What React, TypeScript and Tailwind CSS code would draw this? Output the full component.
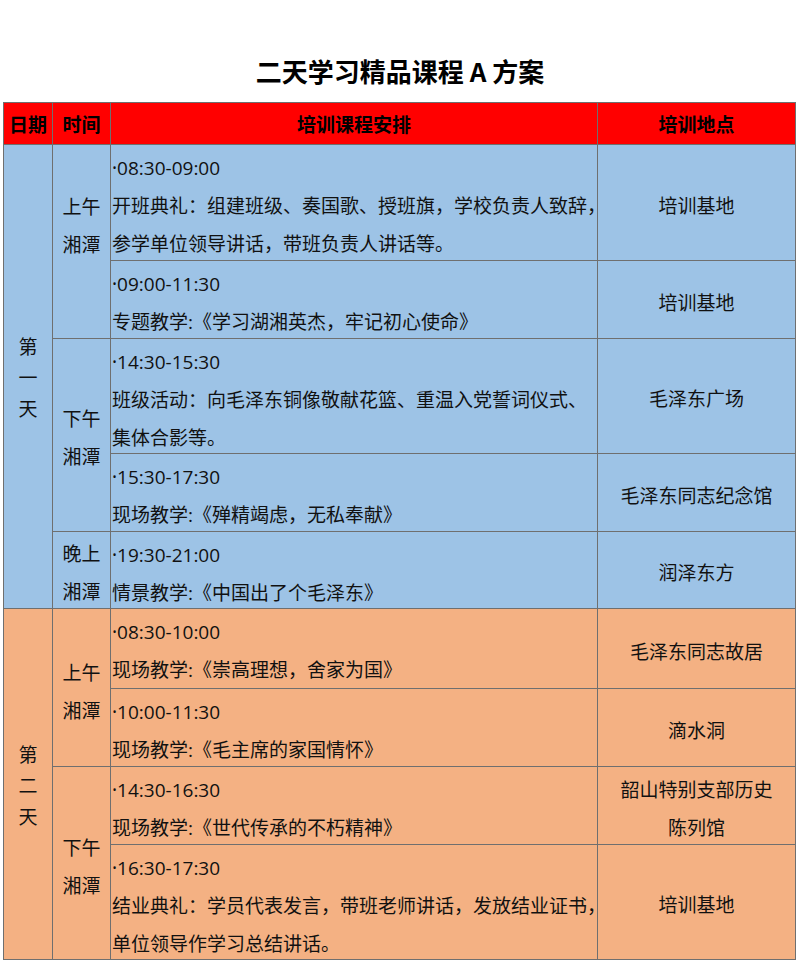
const FONT = "font-['Open_Sans','Noto_Sans_CJK_SC',sans-serif]";

type Row = {
  h: number;
  time: string;
  lines: string[];
  place: string[];
};

const BLUE = "bg-[#9DC3E6]";
const ORANGE = "bg-[#F4B183]";

const day1: Row[] = [
  {
    h: 116,
    time: "08:30-09:00",
    lines: ["开班典礼：组建班级、奏国歌、授班旗，学校负责人致辞，", "参学单位领导讲话，带班负责人讲话等。"],
    place: ["培训基地"],
  },
  { h: 78, time: "09:00-11:30", lines: ["专题教学:《学习湖湘英杰，牢记初心使命》"], place: ["培训基地"] },
  {
    h: 115,
    time: "14:30-15:30",
    lines: ["班级活动：向毛泽东铜像敬献花篮、重温入党誓词仪式、", "集体合影等。"],
    place: ["毛泽东广场"],
  },
  { h: 78, time: "15:30-17:30", lines: ["现场教学:《殚精竭虑，无私奉献》"], place: ["毛泽东同志纪念馆"] },
  { h: 77, time: "19:30-21:00", lines: ["情景教学:《中国出了个毛泽东》"], place: ["润泽东方"] },
];

const day2: Row[] = [
  { h: 80, time: "08:30-10:00", lines: ["现场教学:《崇高理想，舍家为国》"], place: ["毛泽东同志故居"] },
  { h: 78, time: "10:00-11:30", lines: ["现场教学:《毛主席的家国情怀》"], place: ["滴水洞"] },
  { h: 78, time: "14:30-16:30", lines: ["现场教学:《世代传承的不朽精神》"], place: ["韶山特别支部历史", "陈列馆"] },
  {
    h: 115,
    time: "16:30-17:30",
    lines: ["结业典礼：学员代表发言，带班老师讲话，发放结业证书，", "单位领导作学习总结讲话。"],
    place: ["培训基地"],
  },
];

const cell = "border border-[#6f6f6f] p-0";

function Content({ time, lines }: { time: string; lines: string[] }) {
  return (
    <td className={`${cell} align-top pl-[1px]`}>
      <div className="translate-y-[4px]">
        <div className="whitespace-nowrap leading-[38px]">
          <span className="font-['Noto_Sans',sans-serif]">·</span>
          {time}
        </div>
        {lines.map((l) => (
          <div key={l} className="whitespace-nowrap leading-[38px]">
            {l}
          </div>
        ))}
      </div>
    </td>
  );
}

function Place({ lines }: { lines: string[] }) {
  return (
    <td className={`${cell} text-center align-middle`}>
      <div className="translate-y-[3px]">
        {lines.map((l) => (
          <div key={l} className="leading-[38px]">
            {l}
          </div>
        ))}
      </div>
    </td>
  );
}

function Slot({ a, span, shift = "" }: { a: string; span: number; shift?: string }) {
  return (
    <td rowSpan={span} className={`${cell} text-center align-middle`}>
      <div className={shift}>
        <div className="leading-[38px]">{a}</div>
        <div className="leading-[38px]">湘潭</div>
      </div>
    </td>
  );
}

function Day({ label, span }: { label: string; span: number }) {
  return (
    <td rowSpan={span} className={`${cell} text-center align-middle`}>
      <div className="translate-y-[2px]">
        {label.split("").map((c, i) => (
          <div key={i} className="leading-[31px]">
            {c}
          </div>
        ))}
      </div>
    </td>
  );
}

export default function App() {
  return (
    <div className={`min-h-screen w-[800px] bg-white text-[19px] text-[#111] ${FONT}`}>
      {/* title */}
      <div className="h-[102px] pt-[54px] text-center">
        <h1 className="font-['Noto_Sans_CJK_SC',sans-serif] text-[26px] font-bold leading-[34px] text-black">
          二天学习精品课程 A 方案
        </h1>
      </div>

      <table className="ml-[3px] w-[792px] table-fixed border-collapse">
        <colgroup>
          <col className="w-[49px]" />
          <col className="w-[58px]" />
          <col className="w-[487px]" />
          <col className="w-[198px]" />
        </colgroup>
        <thead>
          <tr className="h-[42px] bg-[#FF0000] text-black">
            <th className={`${cell} pt-[4px] font-bold`}>日期</th>
            <th className={`${cell} pt-[4px] font-bold`}>时间</th>
            <th className={`${cell} pt-[4px] font-bold`}>培训课程安排</th>
            <th className={`${cell} pt-[4px] font-bold`}>培训地点</th>
          </tr>
        </thead>
        <tbody>
          {day1.map((r, i) => (
            <tr key={i} className={BLUE} style={{ height: r.h }}>
              {i === 0 && <Day label="第一天" span={5} />}
              {i === 0 && <Slot a="上午" span={2} shift="-translate-y-[16px]" />}
              {i === 2 && <Slot a="下午" span={2} shift="translate-y-[3px]" />}
              {i === 4 && <Slot a="晚上" span={1} shift="translate-y-[3px]" />}
              <Content time={r.time} lines={r.lines} />
              <Place lines={r.place} />
            </tr>
          ))}
          {day2.map((r, i) => (
            <tr key={i} className={ORANGE} style={{ height: r.h }}>
              {i === 0 && <Day label="第二天" span={4} />}
              {i === 0 && <Slot a="上午" span={2} shift="translate-y-[4px]" />}
              {i === 2 && <Slot a="下午" span={2} shift="translate-y-[4px]" />}
              <Content time={r.time} lines={r.lines} />
              <Place lines={r.place} />
            </tr>
          ))}
        </tbody>
      </table>
    </div>
  );
}
